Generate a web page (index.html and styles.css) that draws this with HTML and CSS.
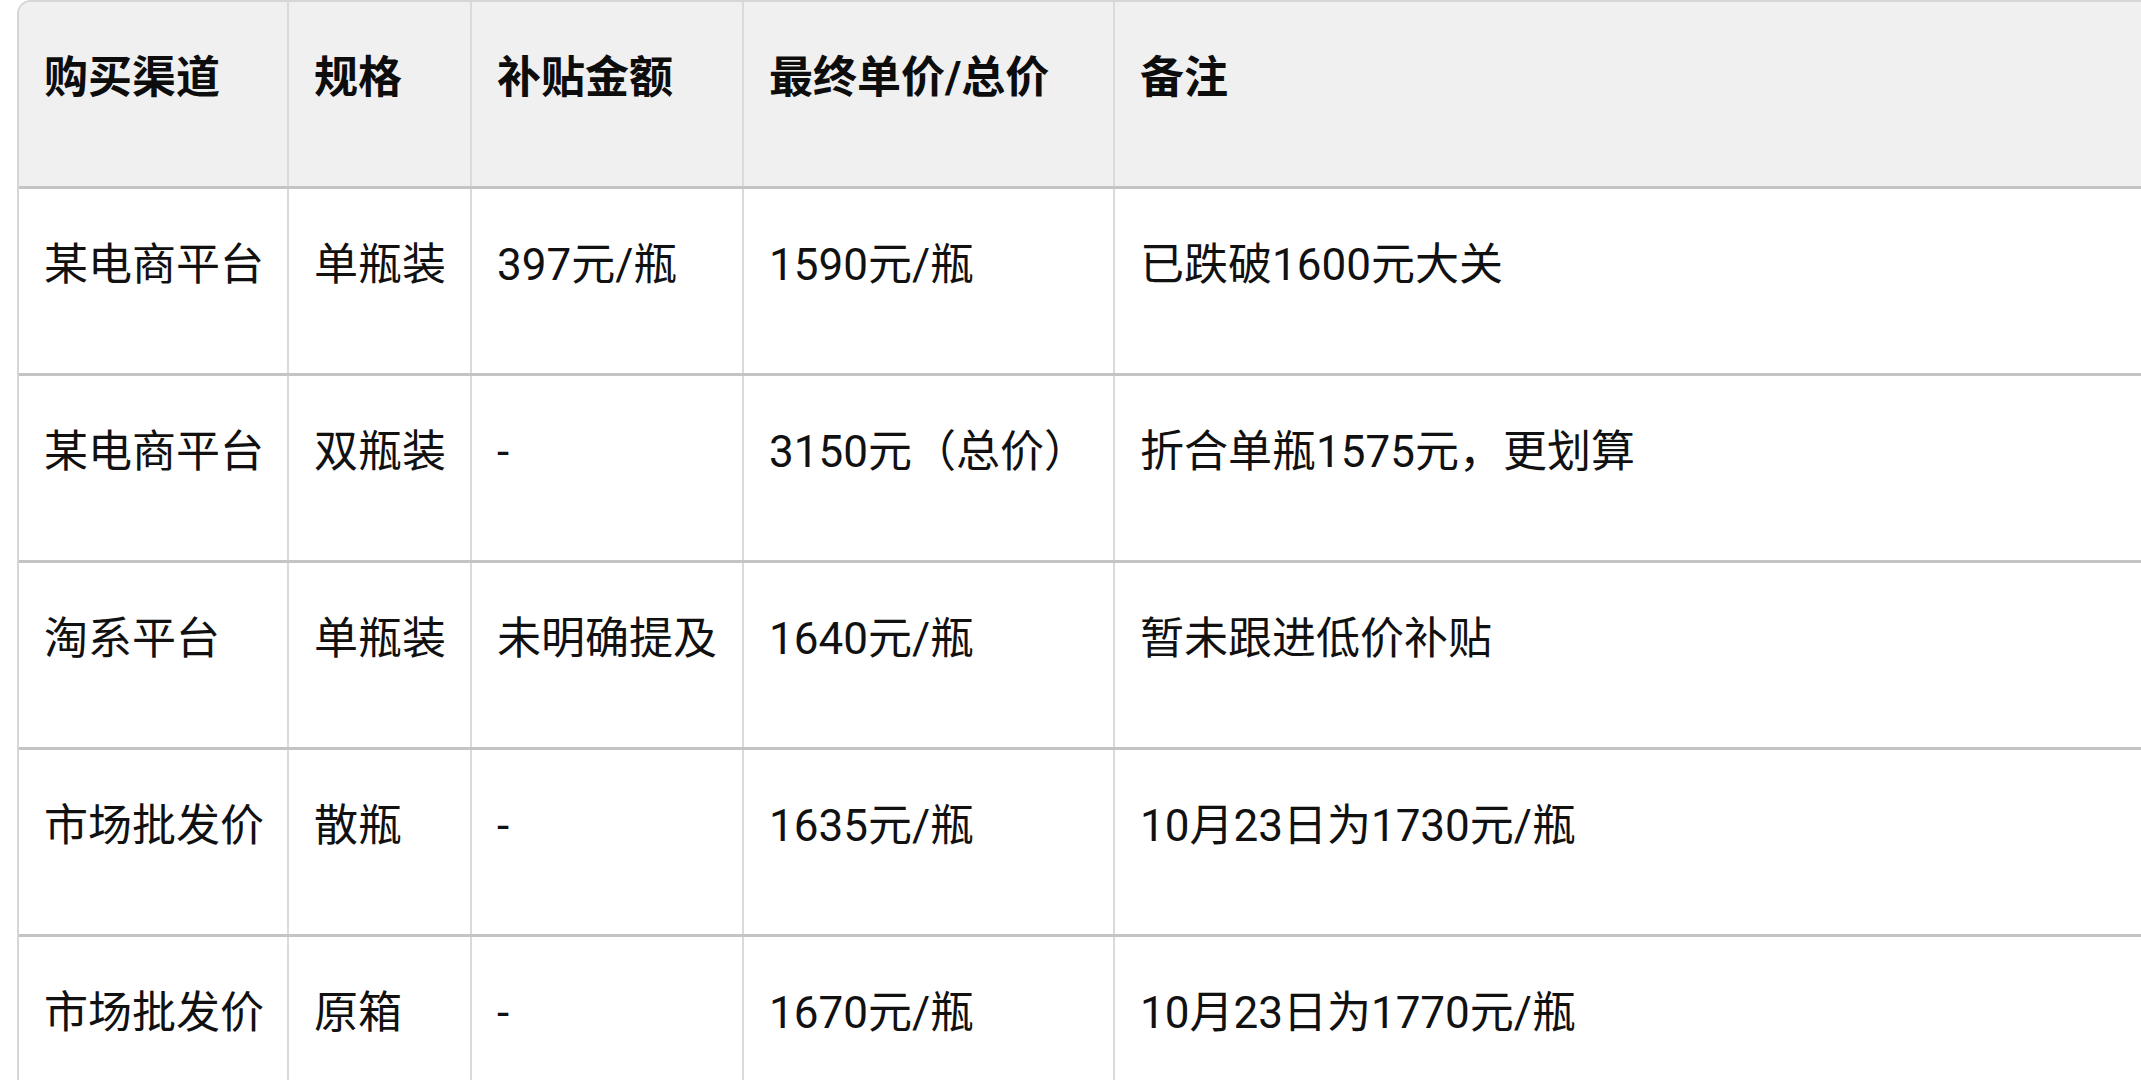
FILE: index.html
```html
<!DOCTYPE html>
<html lang="zh-CN">
<head>
<meta charset="utf-8">
<title>价格对比</title>
<link rel="stylesheet" href="styles.css">
</head>
<body>
<div class="sheet">
  <div class="row head">
    <div class="cell">购买渠道</div>
    <div class="cell">规格</div>
    <div class="cell">补贴金额</div>
    <div class="cell">最终单价/总价</div>
    <div class="cell">备注</div>
  </div>
  <div class="row">
    <div class="cell">某电商平台</div>
    <div class="cell">单瓶装</div>
    <div class="cell">397元/瓶</div>
    <div class="cell">1590元/瓶</div>
    <div class="cell">已跌破1600元大关</div>
  </div>
  <div class="row">
    <div class="cell">某电商平台</div>
    <div class="cell">双瓶装</div>
    <div class="cell">-</div>
    <div class="cell">3150元（总价）</div>
    <div class="cell">折合单瓶1575元，更划算</div>
  </div>
  <div class="row">
    <div class="cell">淘系平台</div>
    <div class="cell">单瓶装</div>
    <div class="cell">未明确提及</div>
    <div class="cell">1640元/瓶</div>
    <div class="cell">暂未跟进低价补贴</div>
  </div>
  <div class="row">
    <div class="cell">市场批发价</div>
    <div class="cell">散瓶</div>
    <div class="cell">-</div>
    <div class="cell">1635元/瓶</div>
    <div class="cell">10月23日为1730元/瓶</div>
  </div>
  <div class="row">
    <div class="cell">市场批发价</div>
    <div class="cell">原箱</div>
    <div class="cell">-</div>
    <div class="cell">1670元/瓶</div>
    <div class="cell">10月23日为1770元/瓶</div>
  </div>
</div>
</body>
</html>
```

FILE: styles.css
```css
html, body {
  margin: 0;
  padding: 0;
  background: #ffffff;
  overflow: hidden;
}

body {
  font-family: Roboto, "Noto Sans CJK SC", "Noto Sans", sans-serif;
  color: #111111;
}

.sheet {
  margin-left: 17px;
  border-left: 2px solid #d6d6d6;
  border-top: 2px solid #d6d6d6;
  border-top-left-radius: 14px;
  overflow: hidden;
}

.row {
  display: grid;
  grid-template-columns: 270px 183px 272px 371px 1fr;
  border-bottom: 3px solid #c4c4c4;
}

.row.head {
  background: #f0f0f0;
}

.cell {
  box-sizing: border-box;
  height: 184px;
  padding: 43px 20px 0 25px;
  font-size: 44px;
  line-height: 66px;
  white-space: nowrap;
  border-right: 2px solid #dadada;
}

.cell:last-child {
  border-right: none;
}

.head .cell {
  font-weight: 700;
  color: #0d0d0d;
}
```
